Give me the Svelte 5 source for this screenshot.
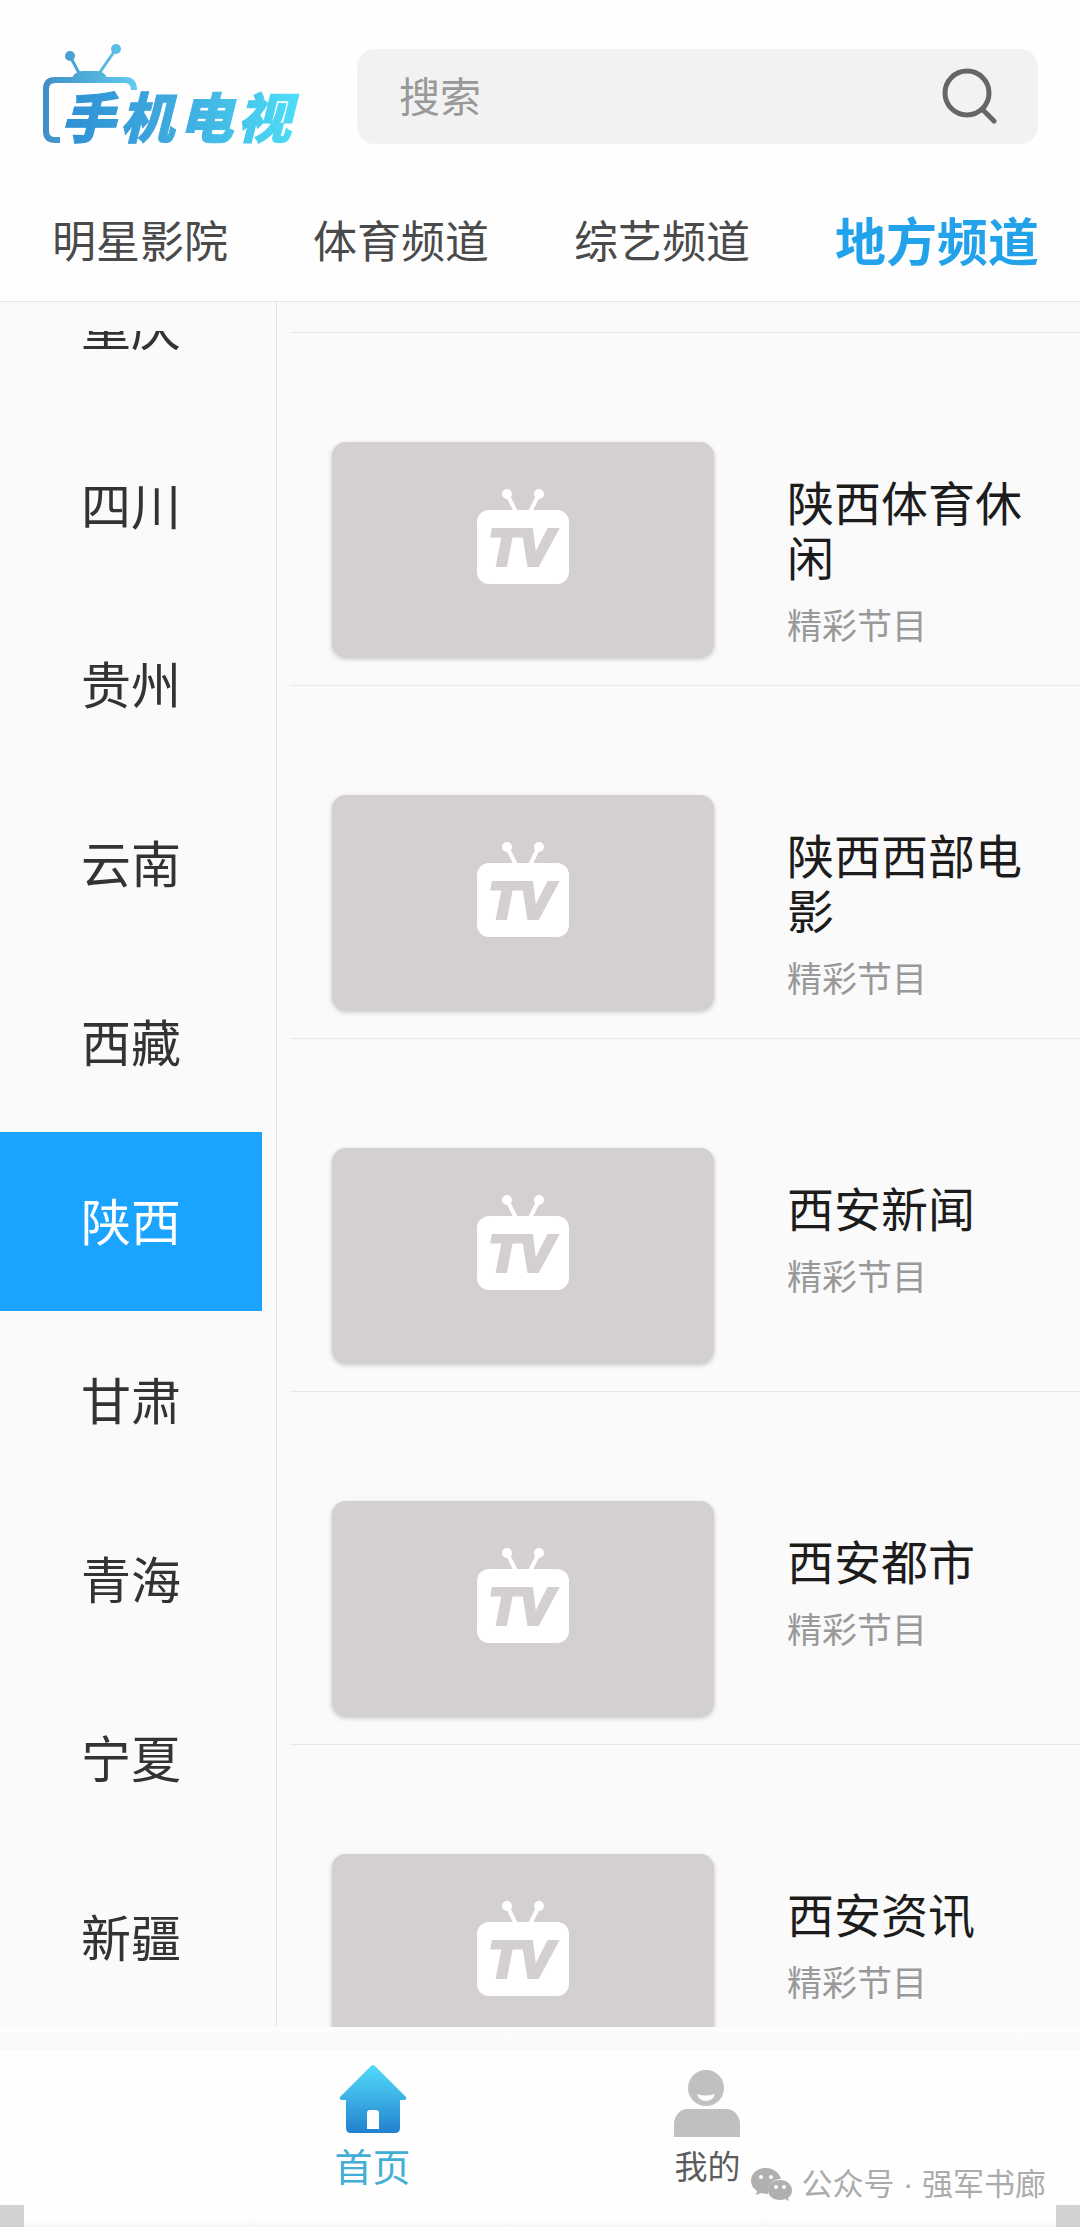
<script lang="ts">
  import { onMount } from "svelte";

  const tabs = ["明星影院", "体育频道", "综艺频道", "地方频道"];
  const regions = [
    "重庆",
    "四川",
    "贵州",
    "云南",
    "西藏",
    "陕西",
    "甘肃",
    "青海",
    "宁夏",
    "新疆"
  ];
  const channels = [
    { name: "陕西体育休闲", desc: "精彩节目" },
    { name: "陕西西部电影", desc: "精彩节目" },
    { name: "西安新闻", desc: "精彩节目" },
    { name: "西安都市", desc: "精彩节目" },
    { name: "西安资讯", desc: "精彩节目" }
  ];

  let activeTab = $state("地方频道");
  let activeRegion = $state("陕西");
  let keyword = $state("");
  let regionList: HTMLElement;

  onMount(() => {
    regionList.scrollTop = 98;
  });
</script>

<div class="app">
  <header>
    <div class="top">
      <svg class="logo" viewBox="0 0 262 104" role="img" aria-label="手机电视">
        <defs>
          <linearGradient id="logo-frame" gradientUnits="userSpaceOnUse" x1="0" y1="0" x2="100" y2="0">
            <stop offset="0" stop-color="#3d8bc4" />
            <stop offset="1" stop-color="#62cdee" />
          </linearGradient>
          <linearGradient id="logo-text" gradientUnits="userSpaceOnUse" x1="24" y1="0" x2="256" y2="0">
            <stop offset="0" stop-color="#2f90d4" />
            <stop offset="0.5" stop-color="#3fabdf" />
            <stop offset="1" stop-color="#4cdcf6" />
          </linearGradient>
        </defs>
        <g fill="none" stroke="url(#logo-frame)">
          <path stroke-width="6" d="M22 98H17Q8 98 8 89V47Q8 38 17 38H87Q96 38 96 48" />
          <path stroke-width="3" d="M32 14L42 33M78 7L60 33" />
        </g>
        <g fill="url(#logo-frame)">
          <circle cx="32" cy="14" r="5" />
          <circle cx="78" cy="7" r="5" />
          <path d="M32 40Q36 29 44 29H60Q67 29 71 40Z" />
        </g>
        <text y="96" fill="url(#logo-text)" stroke="url(#logo-text)">
          <tspan x="23">手</tspan><tspan x="82">机</tspan><tspan x="141">电</tspan><tspan x="199">视</tspan>
        </text>
      </svg>
      <form class="search" onsubmit={(e) => e.preventDefault()}>
        <input type="text" placeholder="搜索" aria-label="搜索" bind:value={keyword} />
        <button type="submit" aria-label="搜索">
          <svg viewBox="0 0 56 56">
            <circle cx="25" cy="25" r="22" />
            <path d="M40 41L52 53" />
          </svg>
        </button>
      </form>
    </div>
    <nav class="tabs">
      {#each tabs as tab}
        <button class:active={tab === activeTab} onclick={() => (activeTab = tab)}>{tab}</button>
      {/each}
    </nav>
  </header>

  <main>
    <aside>
      <div class="regions" bind:this={regionList}>
        {#each regions as region}
          <button class:active={region === activeRegion} onclick={() => (activeRegion = region)}>
            {region}
          </button>
        {/each}
      </div>
    </aside>
    <section class="channels">
      {#each channels as channel}
        <a class="channel" href="#play">
          <div class="thumb">
            <svg viewBox="0 0 94 96" aria-hidden="true">
              <g fill="#fff">
                <circle cx="31" cy="6" r="5" />
                <circle cx="63" cy="6" r="5" />
                <rect x="1" y="22" width="92" height="74" rx="12" />
              </g>
              <path d="M31 6L40 24M63 6L54 24" stroke="#fff" stroke-width="4" />
              <text x="45" y="77" text-anchor="middle">TV</text>
            </svg>
          </div>
          <div class="info">
            <h3>{channel.name}</h3>
            <p>{channel.desc}</p>
          </div>
        </a>
      {/each}
    </section>
  </main>

  <footer>
    <div class="fade"></div>
    <nav class="bottom">
      <a class="home" href="#home">
        <svg viewBox="0 0 68 68" aria-hidden="true">
          <defs>
            <linearGradient id="home-fill" x1="0" y1="0" x2="0" y2="1">
              <stop offset="0" stop-color="#52dcfa" />
              <stop offset="0.5" stop-color="#3bb0e6" />
              <stop offset="1" stop-color="#2180cd" />
            </linearGradient>
          </defs>
          <path
            fill="url(#home-fill)"
            fill-rule="evenodd"
            d="M34 0Q35 0 36 1L67 32Q68 35 65 35H61V63Q61 68 56 68H12Q7 68 7 63V35H3Q0 35 1 32L32 1Q33 0 34 0ZM31 45Q28 45 28 48V64H40V48Q40 45 37 45Z"
          />
        </svg>
        <span>首页</span>
      </a>
      <a class="mine" href="#mine">
        <svg viewBox="0 0 68 68" aria-hidden="true">
          <circle cx="33" cy="19" r="18" fill="#c0c0c0" />
          <path fill="#fff" d="M24 25Q33 28 42 25Q40 32 33 32Q26 32 24 25Z" />
          <path fill="#c0c0c0" d="M1 68V53Q3 42 13 40H55Q65 42 67 53V68Z" />
        </svg>
        <span>我的</span>
      </a>
    </nav>
    <div class="edge"><div></div></div>
    <div class="account">
      <svg viewBox="0 0 42 34" aria-hidden="true">
        <path
          fill="#b0b0b0"
          d="M15 0C6 0 0 6 0 13C0 17 2 20 6 23L5 27L10 25Q13 26 17 26C16 17 22 11 30 11C28 4 22 0 15 0Z"
        />
        <path
          fill="#b0b0b0"
          d="M29 12C22 12 17 17 17 22C17 28 22 32 29 32Q32 32 34 31L38 33L37 30C40 28 41 25 41 22C41 17 36 12 29 12Z"
        />
        <g fill="#fff">
          <circle cx="10" cy="9" r="2" />
          <circle cx="20" cy="9" r="2" />
          <circle cx="25" cy="19" r="2" />
          <circle cx="33" cy="19" r="2" />
        </g>
      </svg>
      <span>公众号 · 强军书廊</span>
    </div>
  </footer>
</div>

<style>
  :global(body) {
    margin: 0;
    background: #fff;
  }

  .app {
    display: flex;
    flex-direction: column;
    height: 100vh;
    font-family: "Noto Sans CJK SC", sans-serif;
    background: #fafafa;
  }

  button {
    padding: 0;
    border: none;
    background: transparent;
    font: inherit;
    color: inherit;
    cursor: pointer;
  }

  a {
    color: inherit;
    text-decoration: none;
  }

  header {
    background: #fefefe;
    border-bottom: 1px solid #e4e4e4;
  }

  .top {
    display: flex;
    align-items: center;
    gap: 57px;
    padding: 46px 42px 0 38px;
  }

  .logo {
    width: 262px;
    height: 104px;
    margin-top: -4px;
    overflow: visible;
  }

  .logo text {
    font-size: 54px;
    font-weight: 900;
    font-style: italic;
    stroke-width: 1px;
  }

  .search {
    flex: 1;
    display: flex;
    align-items: center;
    box-sizing: border-box;
    height: 95px;
    padding: 0 40px 0 42px;
    border-radius: 18px;
    background: #f2f2f2;
  }

  .search input {
    flex: 1;
    min-width: 0;
    padding: 0 0 4px;
    border: none;
    outline: none;
    background: transparent;
    font: inherit;
    font-size: 41px;
    color: #444;
  }

  .search input::placeholder {
    color: #999;
    opacity: 1;
  }

  .search svg {
    display: block;
    width: 56px;
    height: 56px;
    fill: none;
    stroke: #666;
    stroke-width: 5;
    stroke-linecap: round;
  }

  .tabs {
    display: flex;
    align-items: center;
    justify-content: space-between;
    box-sizing: border-box;
    height: 155px;
    padding: 31px 41px 0 52px;
  }

  .tabs button {
    font-size: 44px;
    line-height: 60px;
    color: #4a4a4a;
  }

  .tabs .active {
    font-size: 51px;
    font-weight: 700;
    color: #22a2ea;
  }

  main {
    flex: 1;
    min-height: 0;
    display: flex;
    gap: 13px;
  }

  aside {
    flex: none;
    display: flex;
    width: 276px;
    padding-top: 29px;
    border-right: 1px solid #e2e2e2;
  }

  .regions {
    flex: none;
    width: 262px;
    overflow-y: auto;
    scrollbar-width: none;
  }

  .regions button {
    display: block;
    width: 100%;
    height: 179px;
    padding-bottom: 6px;
    font-size: 50px;
    color: #333;
  }

  .regions .active {
    background: #1aa3ff;
    color: #fff;
  }

  .channels {
    flex: 1;
    min-width: 0;
    margin-top: 30px;
    border-top: 1px solid #e8e8e8;
    overflow-y: auto;
    scrollbar-width: none;
  }

  .channel {
    display: flex;
    gap: 73px;
    padding: 109px 42px 28px;
    border-bottom: 1px solid #e8e8e8;
  }

  .thumb {
    flex: none;
    display: flex;
    justify-content: center;
    box-sizing: border-box;
    width: 382px;
    height: 215px;
    padding-top: 46px;
    border-radius: 14px;
    background: #d4d0cf;
    box-shadow: 0 2px 5px rgba(0, 0, 0, 0.22);
  }

  .thumb svg {
    width: 94px;
    height: 96px;
  }

  .thumb text {
    font-family: "Liberation Sans", sans-serif;
    font-size: 50px;
    font-weight: 700;
    font-style: italic;
    fill: #d4d0cf;
    stroke: #d4d0cf;
    stroke-width: 4;
  }

  .info {
    flex: 1;
    min-width: 0;
    padding-top: 31px;
  }

  h3 {
    margin: 0;
    font-size: 47px;
    font-weight: 400;
    line-height: 55px;
    color: #1c1c1c;
  }

  p {
    margin: 15px 0 0;
    font-size: 35px;
    line-height: 52px;
    color: #999;
  }

  footer {
    position: relative;
    background: #fefefe;
  }

  .fade {
    height: 23px;
    background: linear-gradient(#fdfdfd, #f8f8f8);
  }

  .bottom {
    display: flex;
    justify-content: center;
    box-sizing: border-box;
    height: 155px;
    padding-top: 15px;
  }

  .bottom a {
    width: 31%;
    display: flex;
    flex-direction: column;
    align-items: center;
  }

  .bottom svg {
    width: 68px;
    height: 68px;
  }

  .bottom span {
    line-height: 64px;
  }

  .home {
    font-size: 38px;
    color: #42aed6;
  }

  .bottom .mine {
    padding-top: 4px;
    font-size: 33px;
    color: #5c5c5c;
  }

  .mine span {
    line-height: 56px;
  }

  .edge {
    padding: 0 24px;
    background: #d2d2d2;
  }

  .edge div {
    height: 22px;
    background: linear-gradient(#fefefe 70%, #f6f6f6);
  }

  .account {
    position: absolute;
    right: 34px;
    bottom: 20px;
    display: flex;
    align-items: center;
    gap: 8px;
    font-family: "Liberation Sans", "Noto Sans CJK SC", sans-serif;
    font-size: 31px;
    line-height: 44px;
    color: #ababab;
  }

  .account svg {
    width: 42px;
    height: 34px;
  }
</style>
